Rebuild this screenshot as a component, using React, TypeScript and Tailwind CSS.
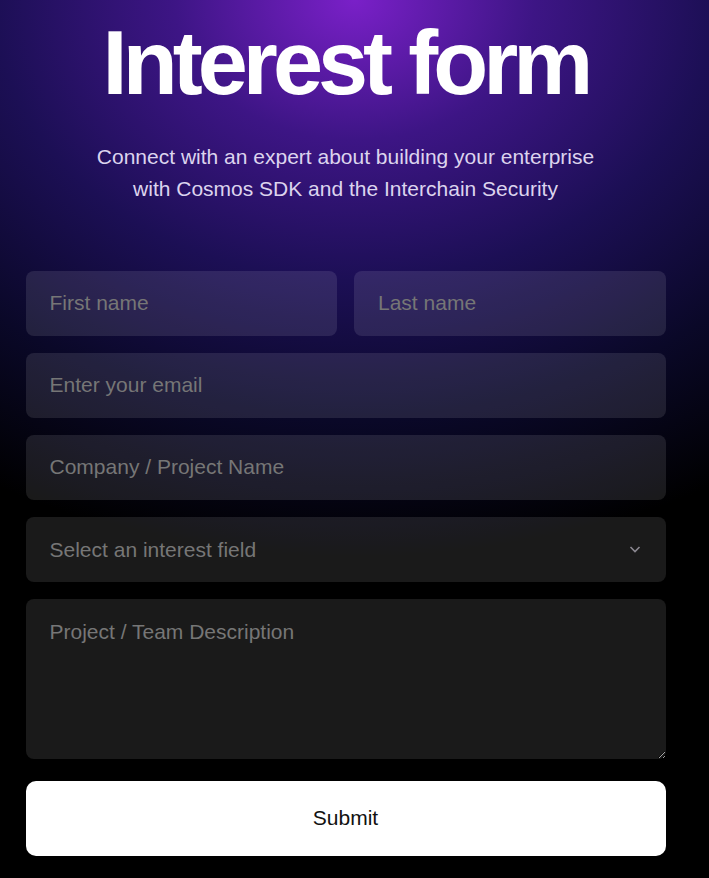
import React from "react";

const inputCls =
  "h-[65px] w-full rounded-lg bg-white/10 px-6 pb-[2px] text-[21px] text-white placeholder:text-[#767676] outline-none";

export default function App() {
  return (
    <div
      className="min-h-[878px] w-full bg-black"
      style={{
        fontFamily: '"Liberation Sans", Arial, sans-serif',
        backgroundImage:
          "radial-gradient(ellipse 900px 700px at 50% 0%, #7a20c8 0%, #3d1585 20%, #1c0f55 40%, #0a0828 60%, #000000 80%)",
      }}
    >
      <div className="mx-auto flex w-[640px] flex-col pt-[18px] -translate-x-[9px]">
        <h1 className="text-center text-[90px] font-bold leading-[90px] tracking-[-0.055em] text-white">
          Interest form
        </h1>
        <p className="mt-[33px] text-center text-[21px] leading-[32px] text-[#dcd4ee]">
          Connect with an expert about building your enterprise
          <br />
          with Cosmos SDK and the Interchain Security
        </p>
        <form className="mt-[66px] flex flex-col gap-[17px]">
          <div className="flex gap-[17px]">
            <input className={inputCls} placeholder="First name" />
            <input className={inputCls} placeholder="Last name" />
          </div>
          <input className={inputCls} placeholder="Enter your email" />
          <input className={inputCls} placeholder="Company / Project Name" />
          <div className="relative">
            <select
              className="h-[65px] w-full appearance-none rounded-lg bg-white/10 px-6 text-[21px] text-[#767676] outline-none"
              defaultValue=""
            >
              <option value="" disabled>
                Select an interest field
              </option>
            </select>
            <svg
              className="pointer-events-none absolute right-[25px] top-[28px]"
              width="12"
              height="9"
              viewBox="0 0 12 9"
              fill="none"
            >
              <path d="M1.5 2l4.5 4.5L10.5 2" stroke="#8a8790" strokeWidth="1.6" />
            </svg>
          </div>
          <textarea
            className="h-[160px] w-full rounded-lg bg-white/10 px-6 pt-[17px] text-[21px] text-white placeholder:text-[#767676] outline-none"
            placeholder="Project / Team Description"
          />
          <button
            type="button"
            className="mt-[5px] h-[75px] w-full rounded-[10px] bg-white pb-[2px] text-[21px] text-[#111]"
          >
            Submit
          </button>
        </form>
      </div>
    </div>
  );
}
